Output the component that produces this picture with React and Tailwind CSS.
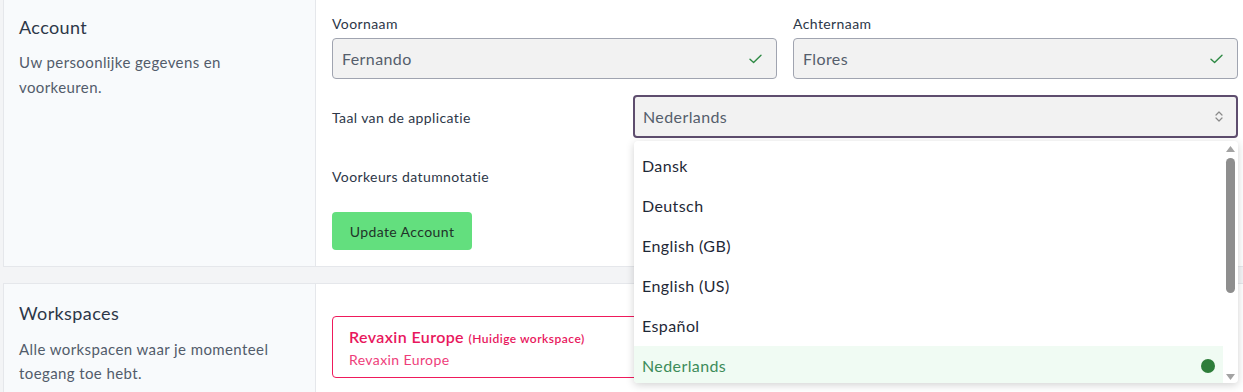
import React from "react";

const Check = () => (
  <svg width="13" height="10" viewBox="0 0 13 10" fill="none">
    <path d="M1 5.2 L4.6 8.6 L12 1.2" stroke="#2f8a45" strokeWidth="1.4" strokeLinecap="round" strokeLinejoin="round" />
  </svg>
);

const Chevrons = () => (
  <svg width="8" height="13" viewBox="0 0 8 13" fill="none">
    <path d="M1 5 L4 2 L7 5" stroke="#8a8a8a" strokeWidth="1.2" strokeLinecap="round" strokeLinejoin="round" />
    <path d="M1 8 L4 11 L7 8" stroke="#8a8a8a" strokeWidth="1.2" strokeLinecap="round" strokeLinejoin="round" />
  </svg>
);

const items = ["Dansk", "Deutsch", "English (GB)", "English (US)", "Español", "Nederlands"];

export default function App() {
  return (
    <div
      className="w-[1243px] h-[392px] overflow-hidden bg-[#f3f4f6] pl-[3px] tracking-[0.025em]"
      style={{ fontFamily: "Lato, 'Noto Sans', sans-serif" }}
    >
      {/* Account card */}
      <div className="w-[1250px] h-[267px] flex bg-white border-b border-l border-[#e5e7eb]">
        <div className="w-[312px] shrink-0 bg-[#f8fafc] border-r border-[#e5e7eb] pl-[15px] pt-[15px]">
          <div className="text-[18px] leading-6 text-[#2d3748]">Account</div>
          <div className="mt-[11px] text-[15px] leading-[25px] text-[#525c6b] w-[240px]">
            Uw persoonlijke gegevens en voorkeuren.
          </div>
        </div>
        <div className="flex-1 pl-[16px] pr-[15px] pt-[14px]">
          <div className="grid grid-cols-2 gap-4">
            <div>
              <div className="text-[14px] leading-5 text-[#2d3748] mb-1">Voornaam</div>
              <div className="h-[41px] flex items-center justify-between rounded border border-[#a0a4b0] bg-[#f2f2f2] pl-[9px] pr-[14px]">
                <span className="text-[16px] text-[#555e6c]">Fernando</span>
                <Check />
              </div>
            </div>
            <div>
              <div className="text-[14px] leading-5 text-[#2d3748] mb-1">Achternaam</div>
              <div className="h-[41px] flex items-center justify-between rounded border border-[#a0a4b0] bg-[#f2f2f2] pl-[9px] pr-[14px]">
                <span className="text-[16px] text-[#555e6c]">Flores</span>
                <Check />
              </div>
            </div>
          </div>

          <div className="grid grid-cols-[301px_1fr] mt-4 items-center">
            <div className="text-[14px] text-[#2d3748] pt-[2px]">Taal van de applicatie</div>
            <div className="relative">
              <div className="h-[43px] flex items-center justify-between rounded border-2 border-[#5e4d6e] bg-[#f2f2f2] pl-[8px] pr-[13px]">
                <span className="text-[16px] text-[#555e6c]">Nederlands</span>
                <Chevrons />
              </div>
              {/* Dropdown */}
              <div className="absolute left-[1px] top-[46px] w-[604px] h-[242px] z-10 bg-white rounded shadow-[0_2px_8px_rgba(0,0,0,0.18)] overflow-hidden flex">
                <div className="flex-1 pt-[5px]">
                  {items.map((it) => {
                    const sel = it === "Nederlands";
                    return (
                      <div
                        key={it}
                        className={
                          sel
                            ? "h-[40px] flex items-center justify-between pl-[8px] pr-[8px] bg-[#f0fbf3] text-[#3d8c5a]"
                            : "h-[40px] flex items-center justify-between pl-[8px] pr-[8px] text-[#1f2937]"
                        }
                      >
                        <span className="text-[16px]">{it}</span>
                        {sel && <span className="w-[14px] h-[14px] rounded-full bg-[#2e7d3a]" />}
                      </div>
                    );
                  })}
                </div>
                <div className="w-[15px] shrink-0 flex flex-col items-center pt-[5px] pb-[3px]">
                  <svg width="9" height="6" viewBox="0 0 9 6"><path d="M0 6 L4.5 0 L9 6 Z" fill="#a3a3a3" /></svg>
                  <div className="mt-[6px] w-[9px] h-[135px] rounded-full bg-[#8e8e8e]" />
                  <div className="flex-1" />
                  <svg width="9" height="6" viewBox="0 0 9 6"><path d="M0 0 L9 0 L4.5 6 Z" fill="#a3a3a3" /></svg>
                </div>
              </div>
            </div>
          </div>

          <div className="grid grid-cols-[301px_1fr] mt-[17px] items-center">
            <div className="text-[14px] text-[#2d3748]">Voorkeurs datumnotatie</div>
            <div className="h-[42px]" />
          </div>

          <button className="mt-[15px] h-[38px] w-[140px] rounded bg-[#63df7e] text-[14px] text-[#1f3329]">
            Update Account
          </button>
        </div>
      </div>

      {/* Workspaces card */}
      <div className="mt-[16px] w-[1250px] h-[200px] flex bg-white border-t border-l border-[#e5e7eb]">
        <div className="w-[312px] shrink-0 bg-[#f8fafc] border-r border-[#e5e7eb] pl-[15px] pt-[17px]">
          <div className="text-[18px] leading-6 text-[#2d3748]">Workspaces</div>
          <div className="mt-[12px] text-[15px] leading-6 text-[#525c6b] w-[280px]">
            Alle workspacen waar je momenteel toegang toe hebt.
          </div>
        </div>
        <div className="flex-1 pl-[16px] pr-[15px] pt-[32px]">
          <div className="h-[62px] rounded border-[1.5px] border-[#ef1a5c] pl-[16px] pt-[10px]">
            <div className="leading-5 text-[#e8175d]">
              <span className="text-[16px] font-semibold">Revaxin Europe</span>{" "}
              <span className="text-[12px] font-semibold tracking-[0.04em]">(Huidige workspace)</span>
            </div>
            <div className="text-[14px] leading-5 text-[#ee3d7a] mt-[1px]">Revaxin Europe</div>
          </div>
        </div>
      </div>
    </div>
  );
}
